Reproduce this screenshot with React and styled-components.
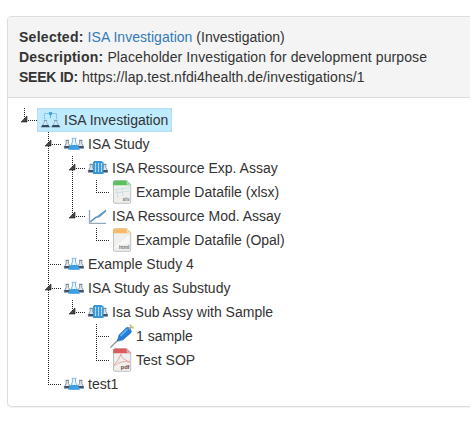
import React from "react";
import styled, { createGlobalStyle, css } from "styled-components";

const GlobalStyle = createGlobalStyle`
  body {
    margin: 0;
    background: #fff;
    color: #333;
    font: 14px/20px "Liberation Sans", Arial, sans-serif;
    overflow: hidden;
  }
`;

const Page = styled.main`
  padding: 16px 0 0 7px;
  overflow: hidden;
  height: 414px;
`;

const Panel = styled.section`
  width: 520px;
  box-sizing: border-box;
  border: 1px solid #ddd;
  border-radius: 4px;
  box-shadow: 0 1px 1px rgba(0, 0, 0, 0.05);
`;

const PanelHeading = styled.header`
  padding: 10px 10px 10px 11px;
  background: #f4f4f4;
  border-bottom: 1px solid #ddd;
  border-radius: 3px 3px 0 0;
  white-space: nowrap;
`;

const Detail = styled.div`
  letter-spacing: ${(p) => p.$tracking || 0}px;
`;

const DetailLabel = styled.b`
  letter-spacing: ${(p) => p.$tracking}px;
`;

const Link = styled.a`
  color: #337ab7;
  text-decoration: none;
`;

const Tree = styled.div`
  padding: 10px 5px;
`;

const Row = styled.div`
  display: flex;
  height: 24px;
`;

const Rail = styled.svg`
  display: block;
  flex: none;
  width: 24px;
  height: 24px;
`;

const Node = styled.div`
  display: flex;
  height: 24px;
  box-sizing: border-box;
  padding: 0 4px 0 1px;
  line-height: 24px;
  white-space: nowrap;
  border-radius: 2px;
  ${(p) =>
    p.$selected &&
    css`
      background: #beebff;
      box-shadow: inset 0 0 1px #777;
    `}
`;

const Icon = styled.svg`
  display: block;
  flex: none;
  width: 24px;
  height: 24px;
  margin-right: 2px;
`;

const SideFlasks = () => (
  <>
    {[5.3, 18.7].map((x) => (
      <g key={x} transform={`translate(${x} 0)`}>
        <path d="M-1.1 8.5V11.2L-3 15H3L1.1 11.2V8.5Z" fill="#dfe5e9" stroke="#8593a0" strokeWidth=".9" />
        <path d="M-1.7 8.3H1.7" stroke="#6d7d8b" strokeWidth=".9" />
        <path d="M-2.5 14H2.5L3.4 16.6H-3.4Z" fill="#3b5268" />
      </g>
    ))}
  </>
);

const icons = {
  investigation: (
    <>
      <path d="M6.5 11V5.5H18.5V11" fill="none" stroke="#7bbbe4" strokeDasharray="2 .6" />
      <path d="M12.5 6V10" stroke="#5dade2" />
      <path d="M11 4H14V7H11Z" fill="#4aa3df" />
      {[7.4, 17.8].map((x) => (
        <g key={x} transform={`translate(${x} 0)`}>
          <path d="M-1 12.5V14L-3.3 18H3.3L1 14V12.5Z" fill="#cde6f2" stroke="#8fabba" strokeWidth=".8" />
          <path d="M-1.7 12.4H1.7" stroke="#7890a0" strokeWidth=".8" />
          <path d="M-3 17H3L4.6 19.3H-4.6Z" fill="#34495e" />
        </g>
      ))}
    </>
  ),
  study: (
    <>
      <SideFlasks />
      <path d="M10.5 6.5V10L7 17H17L13.5 10V6.5Z" fill="#eaf6fd" stroke="#79bfea" />
      <path d="M9.5 6.3H14.5" stroke="#86c5ec" />
      <path d="M8.7 13H15.3L18 17.7H6Z" fill="#3d9fdf" />
    </>
  ),
  assay: (
    <>
      <SideFlasks />
      <path d="M8 5H16V6H17.5V18H7V6H8Z" fill="#3498db" />
      <path d="M9.5 7V16M12.5 7V16M15.5 7V16" stroke="#b9def4" strokeWidth="1.2" />
      <path d="M8 10H17M8 13H17" stroke="#3498db" strokeWidth=".4" />
    </>
  ),
  model: (
    <>
      <path d="M3.5 6V19.3H20" fill="none" stroke="#93a9ba" strokeWidth="1.3" />
      <path d="M4.5 18L9.5 13.2L13 13L20 6.8" fill="none" stroke="#75899a" strokeWidth="1.1" />
      <path d="M4.5 17.5L9 14.2L13 11.5L20 6.3" fill="none" stroke="#4b9bd0" strokeWidth="1.4" />
    </>
  ),
  syringe: (
    <>
      <path d="M.3 23.7L9 15" stroke="#8b989d" strokeWidth="1.3" />
      <path d="M7.3 17.2L9 11L16 4Q17.5 2.6 19 4L20.8 5.8Q22.2 7.4 20.5 9.2L13 15.8Z" fill="#237fda" stroke="#1765b8" strokeWidth=".6" />
      <path d="M10.5 12L17.3 5.2" stroke="#5eb0f2" strokeWidth="1.8" />
      <path d="M19 5.2L21.5 2.7" stroke="#a0a09b" strokeWidth="2" />
      <path d="M19.7 .6L23.6 4.3" stroke="#d5ca7b" strokeWidth="1.8" />
    </>
  ),
};

const FileIcon = ({ color, edge, label }) => (
  <Icon viewBox="0 0 24 24">
    <path d="M3.5 2Q3.5 .8 5 .8H16.5L20.7 4.5V22Q20.7 23.3 19.5 23.3H4.7Q3.5 23.3 3.5 22Z" fill="#efefed" stroke="#bbb" strokeWidth=".9" />
    <path d="M3.2 5.3V2Q3.2 .5 5 .5H16.5L21 5.3Z" fill={color} />
    <path d="M16.3 .8L17 4.8L20.7 5.2Z" fill={edge} />
    {label === "xls" && (
      <path d="M5 9.5L19 7.8M5.5 13L19 11.2M6.5 9L8 18M12 8.5L13 16" stroke="#c5dfe2" strokeWidth=".9" />
    )}
    {label === "html" && <path d="M4 20L19 7V15Z" fill="#f8f8f7" />}
    {label === "pdf" && (
      <path d="M4 17Q9 12 11 6Q11 11 20 14M4 18Q11 12 20 14" fill="none" stroke="#e8a7a7" strokeWidth="1" />
    )}
    <text
      x="19.5"
      y="21"
      textAnchor="end"
      fontFamily="Liberation Sans"
      fontSize={label === "pdf" ? 5.7 : 5}
      fontWeight="bold"
      fill={label === "pdf" ? "#703b3b" : "#777"}
    >
      {label}
    </text>
  </Icon>
);

const NodeIcon = ({ kind }) => {
  if (kind === "xls") return <FileIcon color="#5cc25e" edge="#b5e5b5" label="xls" />;
  if (kind === "html") return <FileIcon color="#f8b968" edge="#ffdfb0" label="html" />;
  if (kind === "pdf") return <FileIcon color="#d85d61" edge="#efaaac" label="pdf" />;
  return <Icon viewBox="0 0 24 24">{icons[kind]}</Icon>;
};

// Rail codes: " " blank, "|" continuing, "+" branch, "L" last branch,
// lower-case "t" / "l" are the same branches with an expanded arrow.
const TreeRail = ({ code }) => {
  const open = code === "t" || code === "l";
  const through = code === "|" || code === "+" || code === "t";
  return (
    <Rail viewBox="0 0 24 24">
      {code !== " " && (
        <path d={`M11.5 0V${through ? 24 : 13}`} stroke="#222" strokeDasharray="1 1" />
      )}
      {code !== " " && code !== "|" && (
        <path d={`M${open ? 15 : 11} 12.5H24`} stroke="#222" strokeDasharray="1 1" />
      )}
      {open && <path d="M14 8V14H8Z" fill="#444" stroke="#222" strokeWidth=".6" />}
    </Rail>
  );
};

const nodes = [
  ["l", "investigation", "ISA Investigation"],
  [" t", "study", "ISA Study"],
  [" |t", "assay", "ISA Ressource Exp. Assay"],
  [" ||L", "xls", "Example Datafile (xlsx)"],
  [" |l", "model", "ISA Ressource Mod. Assay"],
  [" | L", "html", "Example Datafile (Opal)"],
  [" +", "study", "Example Study 4"],
  [" t", "study", "ISA Study as Substudy"],
  [" |l", "assay", "Isa Sub Assy with Sample"],
  [" | +", "syringe", "1 sample"],
  [" | L", "pdf", "Test SOP"],
  [" L", "study", "test1"],
];

export default function App() {
  return (
    <>
      <GlobalStyle />
      <Page>
        <Panel>
          <PanelHeading>
            <Detail $tracking={0.03}>
              <DetailLabel $tracking={0.27}>Selected:</DetailLabel> <Link>ISA Investigation</Link> (Investigation)
            </Detail>
            <Detail $tracking={0.09}>
              <DetailLabel $tracking={0.23}>Description:</DetailLabel> Placeholder Investigation for development purpose
            </Detail>
            <Detail $tracking={0.07}>
              <DetailLabel $tracking={-0.22}>SEEK ID:</DetailLabel> https://lap.test.nfdi4health.de/investigations/1
            </Detail>
          </PanelHeading>
          <Tree>
            {nodes.map(([rails, kind, label], i) => (
              <Row key={i}>
                {[...rails].map((code, n) => (
                  <TreeRail key={n} code={code} />
                ))}
                <Node $selected={i === 0}>
                  <NodeIcon kind={kind} />
                  {label}
                </Node>
              </Row>
            ))}
          </Tree>
        </Panel>
      </Page>
    </>
  );
}
